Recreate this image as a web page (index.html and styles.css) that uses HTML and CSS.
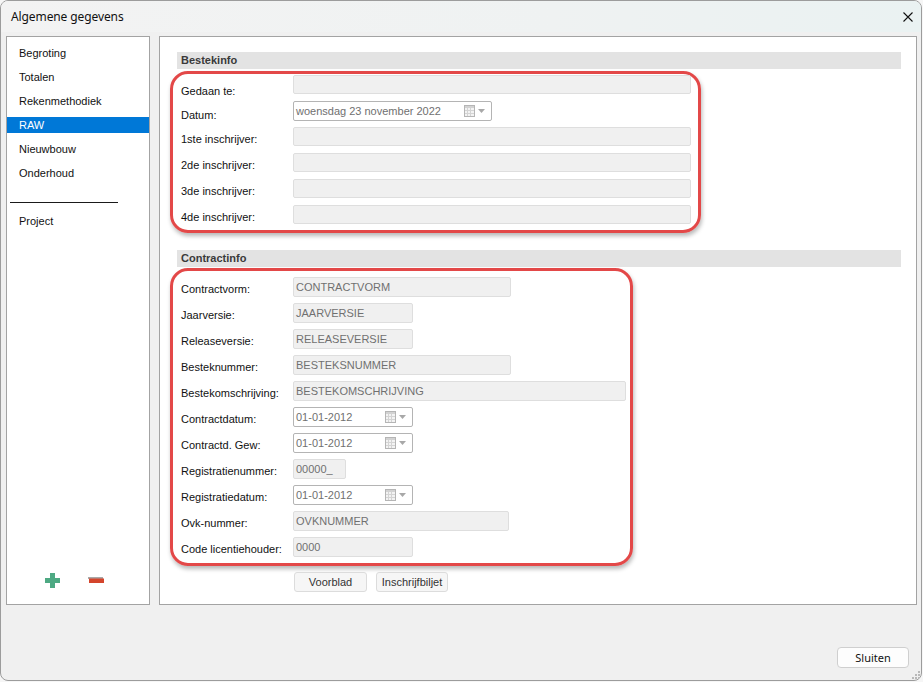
FILE: index.html
```html
<!DOCTYPE html>
<html>
<head>
<meta charset="utf-8">
<title>Algemene gegevens</title>
<link rel="stylesheet" href="styles.css">
</head>
<body>
<div class="window">
  <div class="titlebar">
    <span class="title">Algemene gegevens</span>
    <svg class="close" width="10" height="10" viewBox="0 0 10 10"><path d="M0.5 0.5 L9.5 9.5 M9.5 0.5 L0.5 9.5" stroke="#111" stroke-width="1.1" fill="none"/></svg>
  </div>
  <div class="content">
    <div class="panel nav">
      <div class="nav-list">
        <div class="nav-item">Begroting</div>
        <div class="nav-item">Totalen</div>
        <div class="nav-item">Rekenmethodiek</div>
        <div class="nav-item selected">RAW</div>
        <div class="nav-item">Nieuwbouw</div>
        <div class="nav-item">Onderhoud</div>
      </div>
      <div class="nav-sep"></div>
      <div class="nav-item project">Project</div>
      <div class="nav-tools">
        <svg class="tool-plus" width="15" height="15" viewBox="0 0 15 15"><rect x="5" y="0" width="5" height="15" fill="#4ea983"/><rect x="0" y="5" width="15" height="5" fill="#4ea983"/></svg>
        <svg class="tool-minus" width="16" height="7" viewBox="0 0 16 7"><rect x="0" y="0" width="15" height="2" fill="#a9a9a9"/><rect x="1" y="1.5" width="15" height="4.5" fill="#d4452c"/></svg>
      </div>
    </div>
    <div class="panel form">
      <div class="section-head">Bestekinfo</div>
      <div class="annot annot-1">
        <div class="row r1"><span class="label">Gedaan te:</span><span class="field f-wide"></span></div>
        <div class="row r2"><span class="label">Datum:</span><span class="date d-long"><span class="date-text">woensdag 23 november 2022</span><svg class="cal" width="11" height="12" viewBox="0 0 11 12"><rect x="0.5" y="0.5" width="10" height="11" fill="#f3f3f3" stroke="#b5b5b5"/><rect x="1" y="1" width="9" height="2" fill="#d2d2d2"/><path d="M3.5 3 V11 M6.5 3 V11 M1 5.5 H10 M1 8.5 H10" stroke="#d4d4d4" stroke-width="1"/></svg><svg class="arrow" width="7" height="4" viewBox="0 0 7 4"><path d="M0 0 H7 L3.5 4 Z" fill="#a8a8a8"/></svg></span></div>
        <div class="row"><span class="label">1ste inschrijver:</span><span class="field f-wide"></span></div>
        <div class="row"><span class="label">2de inschrijver:</span><span class="field f-wide"></span></div>
        <div class="row"><span class="label">3de inschrijver:</span><span class="field f-wide"></span></div>
        <div class="row"><span class="label">4de inschrijver:</span><span class="field f-wide"></span></div>
      </div>

      <div class="section-head second">Contractinfo</div>
      <div class="annot annot-2">
        <div class="row tall"><span class="label">Contractvorm:</span><span class="field f-218">CONTRACTVORM</span></div>
        <div class="row tall"><span class="label">Jaarversie:</span><span class="field f-120">JAARVERSIE</span></div>
        <div class="row tall"><span class="label">Releaseversie:</span><span class="field f-120">RELEASEVERSIE</span></div>
        <div class="row tall"><span class="label">Besteknummer:</span><span class="field f-218">BESTEKSNUMMER</span></div>
        <div class="row tall"><span class="label">Bestekomschrijving:</span><span class="field f-333">BESTEKOMSCHRIJVING</span></div>
        <div class="row tall"><span class="label">Contractdatum:</span><span class="date d-short"><span class="date-text">01-01-2012</span><svg class="cal" width="11" height="12" viewBox="0 0 11 12"><rect x="0.5" y="0.5" width="10" height="11" fill="#f3f3f3" stroke="#b5b5b5"/><rect x="1" y="1" width="9" height="2" fill="#d2d2d2"/><path d="M3.5 3 V11 M6.5 3 V11 M1 5.5 H10 M1 8.5 H10" stroke="#d4d4d4" stroke-width="1"/></svg><svg class="arrow" width="7" height="4" viewBox="0 0 7 4"><path d="M0 0 H7 L3.5 4 Z" fill="#a8a8a8"/></svg></span></div>
        <div class="row tall"><span class="label">Contractd. Gew:</span><span class="date d-short"><span class="date-text">01-01-2012</span><svg class="cal" width="11" height="12" viewBox="0 0 11 12"><rect x="0.5" y="0.5" width="10" height="11" fill="#f3f3f3" stroke="#b5b5b5"/><rect x="1" y="1" width="9" height="2" fill="#d2d2d2"/><path d="M3.5 3 V11 M6.5 3 V11 M1 5.5 H10 M1 8.5 H10" stroke="#d4d4d4" stroke-width="1"/></svg><svg class="arrow" width="7" height="4" viewBox="0 0 7 4"><path d="M0 0 H7 L3.5 4 Z" fill="#a8a8a8"/></svg></span></div>
        <div class="row tall"><span class="label">Registratienummer:</span><span class="field f-53">00000_</span></div>
        <div class="row tall"><span class="label">Registratiedatum:</span><span class="date d-short"><span class="date-text">01-01-2012</span><svg class="cal" width="11" height="12" viewBox="0 0 11 12"><rect x="0.5" y="0.5" width="10" height="11" fill="#f3f3f3" stroke="#b5b5b5"/><rect x="1" y="1" width="9" height="2" fill="#d2d2d2"/><path d="M3.5 3 V11 M6.5 3 V11 M1 5.5 H10 M1 8.5 H10" stroke="#d4d4d4" stroke-width="1"/></svg><svg class="arrow" width="7" height="4" viewBox="0 0 7 4"><path d="M0 0 H7 L3.5 4 Z" fill="#a8a8a8"/></svg></span></div>
        <div class="row tall"><span class="label">Ovk-nummer:</span><span class="field f-216">OVKNUMMER</span></div>
        <div class="row tall"><span class="label">Code licentiehouder:</span><span class="field f-120">0000</span></div>
      </div>
      <div class="form-buttons">
        <button class="small-btn b-voorblad">Voorblad</button>
        <button class="small-btn b-inschrijf">Inschrijfbiljet</button>
      </div>
    </div>
  </div>
  <div class="footer">
    <button class="close-btn">Sluiten</button>
  </div>
  <svg class="grip" width="8" height="8" viewBox="0 0 8 8"><g fill="#b9b9b9"><rect x="6" y="0" width="2" height="2"/><rect x="3" y="3" width="2" height="2"/><rect x="6" y="3" width="2" height="2"/><rect x="0" y="6" width="2" height="2"/><rect x="3" y="6" width="2" height="2"/><rect x="6" y="6" width="2" height="2"/></g></svg>
</div>
</body>
</html>
```

FILE: styles.css
```css
* { box-sizing: border-box; }

html, body {
  margin: 0;
  padding: 0;
}

body {
  background: #f6f6f6;
  width: 923px;
  height: 682px;
  overflow: hidden;
  font-family: "Liberation Sans", Arial, sans-serif;
  font-size: 11px;
  color: #111;
}

.window {
  position: relative;
  width: 922px;
  height: 681px;
  background: #f0f0f0;
  border: 1px solid #9c9c9c;
  border-radius: 8px;
  display: flex;
  flex-direction: column;
  overflow: hidden;
}

.titlebar {
  height: 31px;
  flex: none;
  display: flex;
  align-items: center;
  justify-content: space-between;
  padding: 0 8px 0 10px;
  background: linear-gradient(90deg, #f3f3f3 0%, #eff2f2 60%, #eaf2f2 100%);
}

.title {
  font-family: "Noto Sans", "Open Sans", sans-serif;
  font-size: 12px;
  color: #111;
  letter-spacing: -0.1px;
}

.close { display: block; }

.content {
  display: flex;
  gap: 9px;
  padding: 4px 4px 0 5px;
  flex: none;
}

.panel {
  height: 569px;
  background: #fff;
  border: 1px solid #a3a3a3;
}

.nav {
  width: 144px;
  flex: none;
  display: flex;
  flex-direction: column;
  padding-top: 8px;
}

.nav-list {
  display: flex;
  flex-direction: column;
  gap: 8px;
}

.nav-item {
  height: 16px;
  line-height: 16px;
  padding-left: 12px;
  color: #111;
}

.nav-item.selected {
  background: #0078d7;
  color: #fff;
}

.nav-sep {
  margin: 21px 0 0 3px;
  width: 108px;
  height: 1px;
  background: #1a1a1a;
}

.project { margin-top: 10px; }

.nav-tools {
  margin-top: auto;
  display: flex;
  align-items: center;
  gap: 28px;
  padding: 0 0 16px 38px;
}

.tool-plus, .tool-minus { display: block; }

.form {
  flex: 1;
  padding: 15px 15px 0 10px;
}

.section-head {
  margin-left: 7px;
  height: 17px;
  line-height: 17px;
  background: #e3e3e3;
  padding-left: 4px;
  font-weight: bold;
  color: #3a3a3a;
}

.section-head.second { margin-top: 17px; }

.annot {
  margin-top: 2px;
  border: 3px solid #e34848;
  border-radius: 18px;
  box-shadow: 1px 3px 4px rgba(0, 0, 0, 0.28);
  display: flex;
  flex-direction: column;
  gap: 6px;
  padding: 1px 0 5px 8px;
}

.annot-1 { width: 531px; }

.annot-2 {
  width: 463px;
  margin-top: 1px;
  padding-top: 6px;
  padding-bottom: 6px;
}

.row {
  height: 20px;
  display: flex;
  align-items: flex-start;
}

.label {
  width: 112px;
  flex: none;
  align-self: center;
  padding-top: 4px;
  white-space: nowrap;
  color: #111;
}

.r1 .label { padding-top: 11px; }
.r2 .label { padding-top: 8px; }

.field {
  height: 19px;
  line-height: 17px;
  background: #f0f0f0;
  border: 1px solid #dedede;
  border-radius: 2px;
  padding-left: 2px;
  color: #707070;
  white-space: nowrap;
}

.tall .field { height: 20px; line-height: 18px; }

.f-wide { width: 398px; }
.f-218 { width: 218px; }
.f-216 { width: 216px; }
.f-120 { width: 120px; }
.f-333 { width: 333px; }
.f-53 { width: 53px; }

.date {
  height: 20px;
  display: flex;
  align-items: center;
  background: #fff;
  border: 1px solid #b4b4b4;
  border-radius: 2px;
  padding: 0 6px 0 2px;
  color: #707070;
}

.d-long { width: 199px; }
.d-short { width: 120px; }

.date-text {
  flex: 1;
  white-space: nowrap;
  line-height: 18px;
}

.cal { display: block; margin-right: 3px; }
.arrow { display: block; }

.form-buttons {
  display: flex;
  gap: 9px;
  margin: 6px 0 0 124px;
}

.small-btn {
  height: 20px;
  padding: 0;
  font-family: "Liberation Sans", Arial, sans-serif;
  font-size: 11px;
  color: #333;
  background: #f6f6f6;
  border: 1px solid #dcdcdc;
  border-radius: 3px;
}

.b-voorblad { width: 73px; }
.b-inschrijf { width: 72px; }

.footer {
  flex: 1;
  display: flex;
  justify-content: flex-end;
  align-items: flex-start;
  padding: 42px 12px 0 0;
}

.close-btn {
  width: 72px;
  height: 21px;
  padding: 0;
  font-family: "Noto Sans", "Open Sans", sans-serif;
  font-size: 11px;
  color: #111;
  background: #fdfdfd;
  border: 1px solid #cfcfcf;
  border-radius: 4px;
}

.grip {
  position: absolute;
  right: 1px;
  bottom: 1px;
}
```
